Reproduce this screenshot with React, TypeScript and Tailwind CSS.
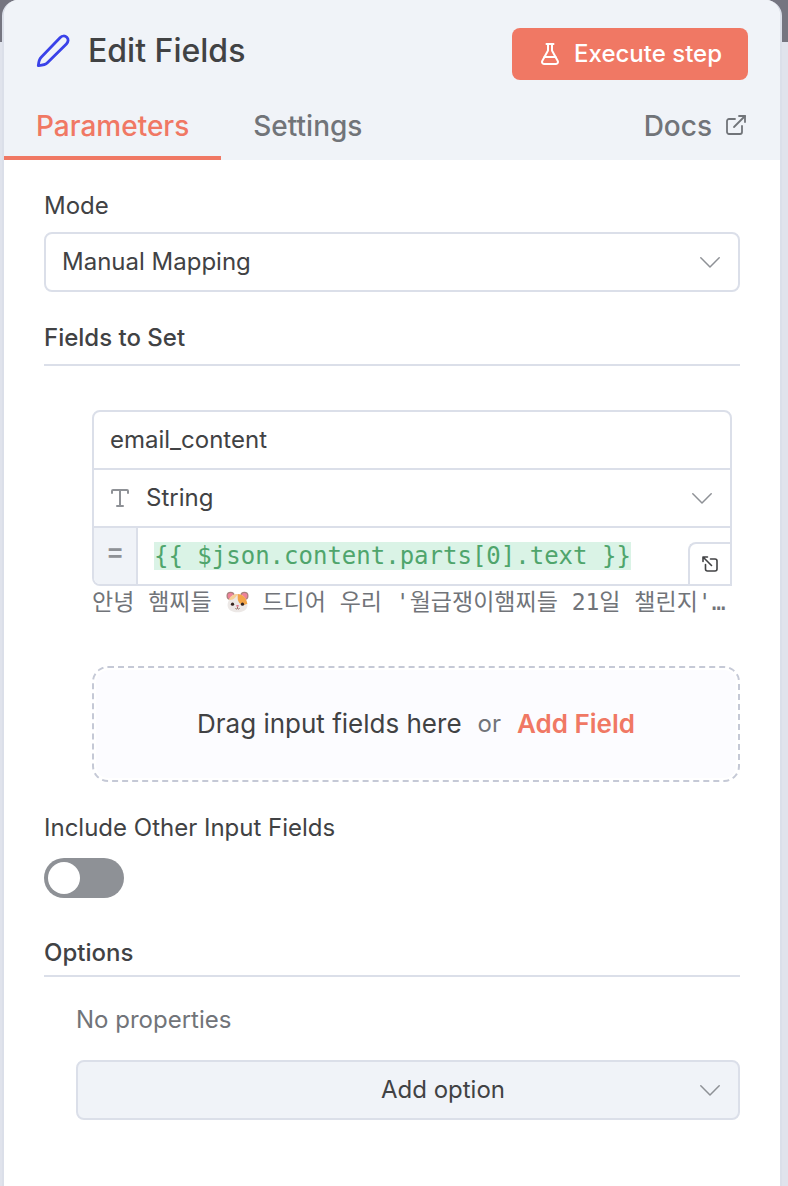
import { useState } from "react";
import { ExternalLink, FlaskConical, Type } from "lucide-react";

function Chevron() {
  return (
    <svg
      className="pointer-events-none h-[11px] w-5 text-[#8e9196]"
      viewBox="0 0 20 11"
      fill="none"
      stroke="currentColor"
      strokeWidth="1.5"
      strokeLinecap="round"
      strokeLinejoin="round"
      aria-hidden="true"
    >
      <path d="M.8 .8 10 10 19.2 .8" />
    </svg>
  );
}

function PencilIcon() {
  return (
    <svg className="size-[34px] text-[#3a42e9]" viewBox="0 0 34 34" fill="none" stroke="currentColor" strokeWidth="2.8" strokeLinejoin="round" aria-hidden="true">
      <path d="M2.300 31.700 C2.600 28.500 2.800 25.600 5.200 23.200 L24 3.700 C26.200 1.500 29 1.600 30.800 3.200 C32.700 5 32.500 7.800 30.400 9.900 L11.400 28.800 C9 31.200 5.600 31.400 2.300 31.700 Z" />
    </svg>
  );
}

function ExpandIcon() {
  return (
    <svg className="size-4" viewBox="0 0 16 16" fill="none" stroke="currentColor" strokeWidth="1.6" strokeLinecap="round" strokeLinejoin="round" aria-hidden="true">
      <path d="M1 5.500V1h4.500M1 1l8.500 8.500" />
      <path d="M8.500 3H13a2 2 0 0 1 2 2v8a2 2 0 0 1-2 2H5.500a2 2 0 0 1-2-2V8.500" />
    </svg>
  );
}

function Hamster() {
  return (
    <svg className="inline-block size-[23px] align-[-4px]" viewBox="0 0 24 24" role="img" aria-label="🐹">
      <circle cx="4.800" cy="5.200" r="4.300" fill="#a9807c" />
      <circle cx="19.200" cy="5.200" r="4.300" fill="#a9807c" />
      <circle cx="4.800" cy="5.200" r="3" fill="#ee8299" />
      <circle cx="19.200" cy="5.200" r="3" fill="#ee8299" />
      <path d="M12 3c5.500 0 9 4 10.300 10.500.8 5.500-4 8.700-10.300 8.700S.9 19 1.700 13.500C3 7 6.500 3 12 3Z" fill="#ece8e6" />
      <path d="M12 3c5.500 0 9.300 4 10.300 10.300-3.300 1.700-7.300 1.200-9-1.800C11.700 8.700 12.500 6 12 3Z" fill="#f3a548" />
      <path d="M12 3C7.500 3 4.300 5.500 2.800 9.500 6.500 9.500 10.500 7.500 12 3Z" fill="#f7cf95" />
      <circle cx="6.800" cy="13.800" r="1.700" fill="#35241f" />
      <circle cx="17.200" cy="13.800" r="1.700" fill="#35241f" />
      <ellipse cx="12" cy="15.500" rx="1.500" ry="1" fill="#e06f86" />
      <path d="M12 16.500v1.700m-2.200 0q1.100 1.200 2.200 0 1.100 1.200 2.200 0" fill="none" stroke="#8a5a4c" strokeWidth=".9" />
    </svg>
  );
}

export default function App() {
  const [fieldName, setFieldName] = useState("email_content");
  const [includeOthers, setIncludeOthers] = useState(false);

  return (
    <div className="flex min-h-screen bg-[#e0e3ec] bg-[linear-gradient(#757580,#757580)] bg-[length:100%_42px] bg-no-repeat pr-[6px] pl-[2px] font-['Inter',sans-serif] text-2xl text-[#414244]">
      <main className="flex-1 overflow-hidden rounded-t-2xl border-x-2 border-[#dbdfe9] bg-white">
        <header className="bg-[#f0f3f8]">
          <div className="flex items-start justify-between px-8 pt-7">
            <h1 className="flex items-center gap-[18px] pt-[3px] text-[32px] leading-10 font-medium">
              <PencilIcon />
              Edit Fields
            </h1>
            <button type="button" className="flex h-[52px] items-center gap-3 rounded-lg bg-[#f07864] px-[26px] font-medium text-white">
              <FlaskConical size={24} strokeWidth={2} aria-hidden="true" />
              Execute step
            </button>
          </div>
          <nav className="flex h-20 items-stretch text-[28px] font-medium text-[#717479]">
            <a href="#parameters" className="flex items-center border-b-4 border-[#f07864] px-8 pt-[18px] text-[#f07864]" aria-current="page">
              Parameters
            </a>
            <a href="#settings" className="flex items-center border-b-4 border-transparent px-8 pt-[18px]">
              Settings
            </a>
            <a href="#docs" className="ml-auto flex items-center gap-3 border-b-4 border-transparent px-8 pt-[18px]">
              Docs
              <ExternalLink className="mb-1" size={24} strokeWidth={1.8} aria-hidden="true" />
            </a>
          </nav>
        </header>

        <form className="px-10 pt-7 pb-16" onSubmit={(e) => e.preventDefault()}>
          <label htmlFor="mode" className="block leading-9">
            Mode
          </label>
          <div className="relative mt-2">
            <select id="mode" className="block h-[60px] w-full appearance-none rounded-lg border-2 border-[#dbdfe9] bg-white px-4">
              <option>Manual Mapping</option>
            </select>
            <span className="pointer-events-none absolute inset-y-0 right-5 flex items-center">
              <Chevron />
            </span>
          </div>

          <h2 className="mt-7 border-b-2 border-[#dbdfe9] pb-2 leading-9 font-medium">Fields to Set</h2>

          <div className="mt-11 mr-2 ml-12">
            <div className="overflow-hidden rounded-t-lg rounded-bl-lg border-2 border-[#dbdfe9]">
              <input
                aria-label="Field name"
                className="block h-[58px] w-full border-b-2 border-[#dbdfe9] px-4 pb-[2px] outline-none"
                value={fieldName}
                onChange={(e) => setFieldName(e.target.value)}
              />
              <div className="relative border-b-2 border-[#dbdfe9]">
                <span className="pointer-events-none absolute inset-y-0 left-[14px] flex items-center text-[#8e9196]">
                  <Type size={24} strokeWidth={2} aria-hidden="true" />
                </span>
                <select aria-label="Field type" className="block h-14 w-full appearance-none bg-white pr-12 pl-[52px]">
                  <option>String</option>
                </select>
                <span className="pointer-events-none absolute inset-y-0 right-[18px] flex items-center">
                  <Chevron />
                </span>
              </div>
              <div className="flex h-14">
                <span className="flex w-11 items-center justify-center border-r-2 border-[#dbdfe9] bg-[#f0f3f8] pb-2 text-[28px] font-medium text-[#8e9196]" aria-hidden="true">
                  =
                </span>
                <div className="flex flex-1 items-center pl-4">
                  <code className="bg-[#daf3e6] font-['DejaVu_Sans_Mono',monospace] leading-7 whitespace-nowrap text-[#4fa56c]">
                    {"{{ $json.content.parts[0].text }}"}
                  </code>
                </div>
                <button type="button" aria-label="Open expression editor" className="flex h-[42px] w-[42px] items-center justify-center self-end rounded-tl-lg border-t-2 border-l-2 border-[#dbdfe9] bg-white">
                  <ExpandIcon />
                </button>
              </div>
            </div>
            <p className="h-8 font-['DejaVu_Sans_Mono','Noto_Sans_CJK_KR',monospace] text-[23px] leading-8 whitespace-nowrap text-[#717479]">
              안녕 햄찌들 <Hamster /> 드디어 우리 '월급쟁이햄찌들 21일 챌린지'…
            </p>
          </div>

          <div className="mt-12 ml-12 rounded-2xl border-2 border-dashed border-[#c5c9d6] p-[2px]">
            <div className="flex h-[108px] items-center justify-center gap-4 rounded-xl bg-[#fcfcff] text-[26px]">
              <span>Drag input fields here</span>
              <span className="text-2xl text-[#717479]">or</span>
              <button type="button" className="font-semibold text-[#f07864]">
                Add Field
              </button>
            </div>
          </div>

          <label htmlFor="include-others" className="mt-7 block leading-9">
            Include Other Input Fields
          </label>
          <input
            id="include-others"
            type="checkbox"
            role="switch"
            checked={includeOthers}
            onChange={(e) => setIncludeOthers(e.target.checked)}
            className="mt-3 block h-10 w-20 appearance-none rounded-full bg-[#8e9196] p-1 before:block before:size-8 before:rounded-full before:bg-white checked:bg-[#4fa56c] checked:before:ml-auto"
          />

          <h2 className="mt-[37px] border-b-2 border-[#dbdfe9] pb-1 leading-9 font-medium">Options</h2>
          <div className="mt-[25px] ml-8">
            <p className="leading-9 text-[#717479]">No properties</p>
            <div className="relative mt-[22px]">
              <select aria-label="Add option" className="block h-[60px] w-full appearance-none rounded-lg border-2 border-[#dbdfe9] bg-[#f0f3f8] pr-4 pl-[86px] text-center [text-align-last:center]">
                <option>Add option</option>
              </select>
              <span className="pointer-events-none absolute inset-y-0 right-5 flex items-center">
                <Chevron />
              </span>
            </div>
          </div>
        </form>
      </main>
    </div>
  );
}
